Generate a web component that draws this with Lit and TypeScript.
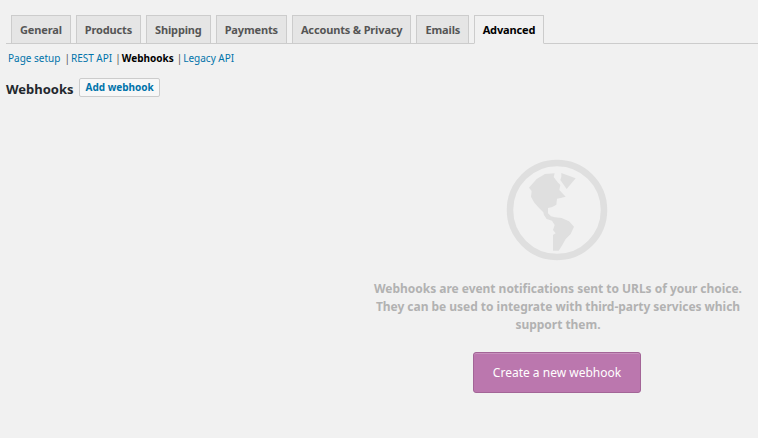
import { LitElement, html, css } from "lit";
import { customElement } from "lit/decorators.js";

const TABS = ["General", "Products", "Shipping", "Payments", "Accounts & Privacy", "Emails", "Advanced"];

@customElement("app-root")
export class AppRoot extends LitElement {
  static styles = css`
    :host {
      display: block;
      width: 758px;
      height: 438px;
      overflow: hidden;
      background: #f1f1f1;
      font-family: "Noto Sans", "Open Sans", sans-serif;
      font-size: 11px;
      color: #444;
    }
    .tabs {
      display: flex;
      gap: 5px;
      margin-left: 6px;
      padding: 15px 0 0 5px;
      border-bottom: 1px solid #ccc;
      height: 28px;
    }
    .tab {
      box-sizing: border-box;
      height: 29px;
      border: 1px solid #ccc;
      background: #e5e5e5;
      color: #555;
      font-weight: 700;
      line-height: 27px;
      text-align: center;
      padding: 0 8px;
      font-size: 11px;
      letter-spacing: -0.15px;
      white-space: nowrap;
    }
    .tab.active {
      padding: 0 7.5px;
      background: #f1f1f1;
      border-bottom-color: #f1f1f1;
      color: #000;
    }
    .sub {
      display: flex;
      padding: 7px 0 0 8px;
      line-height: 15px;
      height: 15px;
      font-size: 10px;
      color: #0073aa;
      white-space: nowrap;
    }
    .sub .sep { color: #555; margin: 0 1px 0 4px; }
    .sub .sep.tight { margin-left: 3px; }
    .sub b { color: #000; }
    .head {
      display: flex;
      align-items: center;
      gap: 5px;
      padding: 13px 0 0 6px;
    }
    h1 {
      margin: 0;
      font-size: 13px;
      font-weight: 700;
      color: #23282d;
      line-height: 20px;
    }
    .add {
      box-sizing: border-box;
      height: 19px;
      margin-top: -4px;
      padding: 0 5px 0 6px;
      border: 1px solid #ccc;
      border-radius: 2px;
      background: #f7f7f7;
      color: #0073aa;
      font-weight: 700;
      font-size: 10px;
      line-height: 16px;
    }
    .empty {
      display: flex;
      flex-direction: column;
      align-items: center;
      width: 380px;
      margin: 60px 0 0 367px;
    }
    .globe { display: block; width: 102px; height: 102px; }
    .msg {
      margin: 19px 0 0 2px;
      width: 376px;
      text-align: center;
      color: #b2b2b2;
      font-size: 12px;
      font-weight: 700;
      letter-spacing: -0.03px;
      line-height: 18px;
    }
    .cta {
      box-sizing: border-box;
      margin-top: 18px;
      width: 168px;
      height: 41px;
      background: #bb77ae;
      border: 1px solid #a36597;
      border-radius: 3px;
      color: #fff;
      font-size: 12px;
      line-height: 39px;
      text-align: center;
      box-shadow: inset 0 1px 0 rgba(255, 255, 255, 0.2);
    }
  `;

  render() {
    return html`
      <div class="tabs">
        ${TABS.map((t) => html`<div class="tab ${t === "Advanced" ? "active" : ""}">${t}</div>`)}
      </div>
      <div class="sub">
        <span>Page setup</span><span class="sep">|</span><span>REST API</span><span class="sep tight">|</span><b>Webhooks</b><span class="sep tight">|</span><span>Legacy API</span>
      </div>
      <div class="head"><h1>Webhooks</h1><div class="add">Add webhook</div></div>
      <div class="empty">
        <svg class="globe" viewBox="0 0 102 102">
          <circle cx="51" cy="51" r="47" fill="none" stroke="#dfdfdf" stroke-width="6.5" />
          <g transform="translate(14 6) scale(0.3333)" fill="#dfdfdf">
            <path d="M104 25 L75 27 L50 42 L27 68 L35 78 L33 95 L42 112 L55 127 L70 142 L72 150 L80 162 L96 167 L104 180 L99 195 L107 205 L99 210 L99 257 L116 257 L127 240 L137 222 L152 207 L162 185 L147 169 L125 159 L105 157 L93 154 L84 145 L84 129 L97 126 L109 119 L111 101 L122 99 L137 95 L127 85 L118 75 L121 60 L113 52 L101 36 Z" />
            <path d="M124 24 L167 40 L140 72 L130 58 L121 45 L124 35 Z" />
          </g>
        </svg>
        <p class="msg">Webhooks are event notifications sent to URLs of your choice. They can be used to integrate with third-party services which support them.</p>
        <div class="cta">Create a new webhook</div>
      </div>
    `;
  }
}
